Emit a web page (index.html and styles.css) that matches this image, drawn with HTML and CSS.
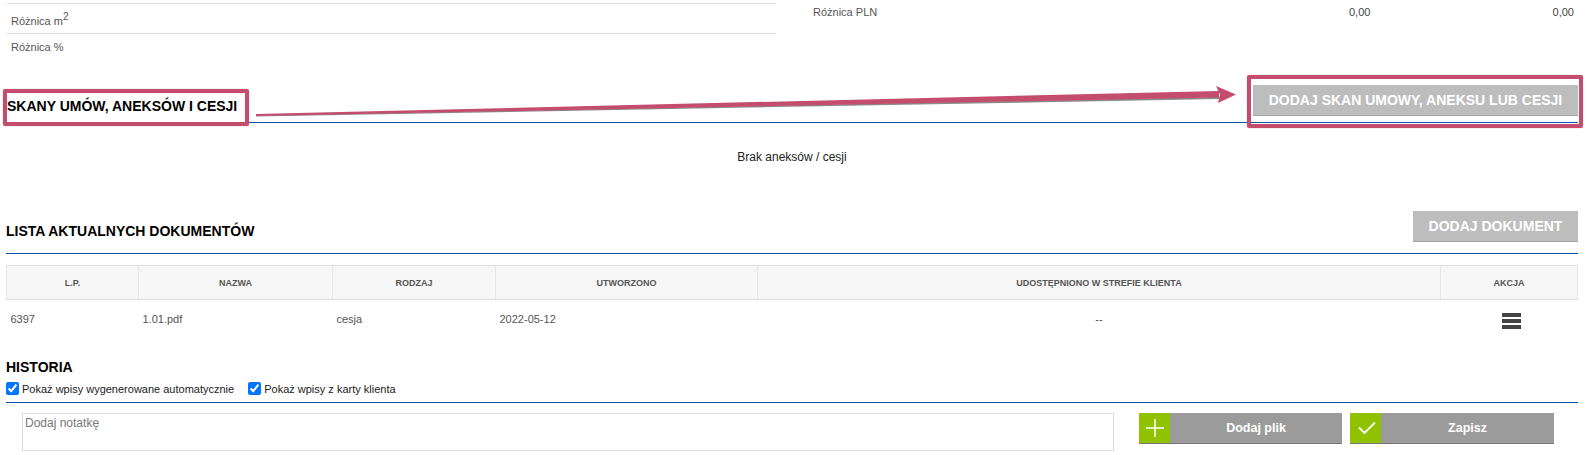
FILE: index.html
```html
<!DOCTYPE html>
<html lang="pl">
<head>
    <meta charset="UTF-8">
    <title>Umowa</title>
    <link rel="stylesheet" href="styles.css">
</head>
<body>
    <div class="page">
        <div class="summary">
            <div class="summary-left">
                <div class="summary-row row-m2">Różnica m<sup>2</sup></div>
                <div class="summary-row row-pct">Różnica %</div>
            </div>
            <div class="summary-right">
                <span class="summary-name">Różnica PLN</span>
                <span class="summary-val val-a">0,00</span>
                <span class="summary-val val-b">0,00</span>
            </div>
        </div>

        <div class="section-head head-scans">
            <h2>Skany umów, aneksów i cesji</h2>
            <button class="btn-grey btn-scan">Dodaj skan umowy, aneksu lub cesji</button>
        </div>
        <div class="empty-note">Brak aneksów / cesji</div>

        <div class="section-head head-docs">
            <h2>Lista aktualnych dokumentów</h2>
            <button class="btn-grey btn-doc">Dodaj dokument</button>
        </div>

        <table class="docs">
            <thead>
                <tr>
                    <th class="col-lp">L.p.</th>
                    <th class="col-name">Nazwa</th>
                    <th class="col-type">Rodzaj</th>
                    <th class="col-date">Utworzono</th>
                    <th class="col-share">Udostępniono w strefie klienta</th>
                    <th class="col-action">Akcja</th>
                </tr>
            </thead>
            <tbody>
                <tr>
                    <td>6397</td>
                    <td>1.01.pdf</td>
                    <td>cesja</td>
                    <td>2022-05-12</td>
                    <td class="center">--</td>
                    <td class="center">
                        <div class="menu-icon"><span></span><span></span><span></span></div>
                    </td>
                </tr>
            </tbody>
        </table>

        <h2 class="history-title">Historia</h2>
        <div class="history-filters">
            <label><input type="checkbox" checked>Pokaż wpisy wygenerowane automatycznie</label>
            <label><input type="checkbox" checked>Pokaż wpisy z karty klienta</label>
        </div>
        <div class="note-row">
            <textarea class="note" placeholder="Dodaj notatkę"></textarea>
            <button class="btn-icon btn-file">
                <span class="btn-icon-box">
                    <svg width="18" height="18" viewBox="0 0 18 18"><path d="M9 0V18M0 9H18" stroke="#fff" stroke-width="1.6" fill="none"/></svg>
                </span>
                <span class="btn-icon-label">Dodaj plik</span>
            </button>
            <button class="btn-icon btn-save">
                <span class="btn-icon-box">
                    <svg class="check" width="18" height="14" viewBox="0 0 18 14"><path d="M1 6.5L6.5 12L17 1.5" stroke="#fff" stroke-width="1.8" fill="none"/></svg>
                </span>
                <span class="btn-icon-label">Zapisz</span>
            </button>
        </div>

        <!-- annotations drawn over the screenshot -->
        <div class="mark mark-title"></div>
        <div class="mark mark-button"></div>
        <svg class="arrow" width="1000" height="40" viewBox="0 0 1000 40">
            <polygon points="6,36.5 969,18 969,20 6,37.5" fill="#8a8a8a"/>
            <polygon points="6,35 969,12 969,18.5 6,37" fill="#c44c6c"/>
            <polygon points="966,7 986,15.5 968,24 970,15.5" fill="#c44c6c"/>
        </svg>
    </div>
</body>
</html>
```

FILE: styles.css
```css
* {
    box-sizing: border-box;
}
html, body {
    margin: 0;
    padding: 0;
    background: #fff;
    overflow: hidden;
}
.page {
    position: relative;
    width: 1589px;
    height: 455px;
    padding: 3px 11px 0 6px;
    font-family: "Liberation Sans", Arial, sans-serif;
    font-size: 11px;
    color: #555;
}
.summary {
    display: flex;
    height: 68px;
}
.summary-left {
    width: 769px;
    margin-left: 1px;
}
.summary-row {
    padding-left: 4px;
    border-top: 1px solid #ddd;
}
.row-m2 {
    height: 30px;
    padding-top: 11px;
}
.row-m2 sup {
    font-size: 10px;
    line-height: 0;
}
.row-pct {
    padding-top: 7px;
}
.summary-right {
    display: flex;
    flex: 1;
    margin-left: 37px;
    height: 18px;
    padding-top: 3px;
}
.summary-name {
    width: 536px;
}
.summary-val {
    color: #444;
    text-align: right;
}
.val-a {
    width: 20px;
}
.val-b {
    width: 205px;
}
.section-head {
    display: flex;
    justify-content: space-between;
    align-items: center;
    border-bottom: 1px solid #0b57a4;
}
h2 {
    margin: 0;
    font-size: 14px;
    font-weight: bold;
    color: #000;
    text-transform: uppercase;
}
.head-scans {
    height: 52px;
    padding-top: 14px;
}
.head-scans h2 {
    padding-left: 1px;
    margin-top: 5px;
}
.btn-grey {
    border: 0;
    border-bottom: 1px solid #a5a5a5;
    background: #bdbdbd;
    color: #fff;
    font-family: inherit;
    font-size: 14px;
    font-weight: bold;
    text-transform: uppercase;
    padding: 0;
}
.btn-scan {
    width: 325px;
    height: 31px;
    margin-bottom: 6px;
}
.empty-note {
    height: 88px;
    padding-top: 27px;
    text-align: center;
    font-size: 12px;
    color: #222;
}
.head-docs {
    height: 43px;
}
.head-docs h2 {
    margin-bottom: 2px;
}
.btn-doc {
    width: 165px;
    height: 31px;
    margin-bottom: 11px;
}
.docs {
    width: 100%;
    margin-top: 11px;
    border-collapse: collapse;
    table-layout: fixed;
}
.docs th {
    height: 34px;
    padding: 0;
    background: #f6f6f6;
    border: 1px solid #e6e6e6;
    border-top: 1px solid #ddd;
    border-bottom: 1px solid #ddd;
    font-size: 9px;
    font-weight: bold;
    color: #555;
    text-transform: uppercase;
}
.docs td {
    height: 38px;
    padding: 0 4px;
    font-size: 11px;
    color: #555;
}
.docs .center {
    text-align: center;
}
.col-lp { width: 132px; }
.col-name { width: 194px; }
.col-type { width: 163px; }
.col-date { width: 262px; }
.col-action { width: 137px; }
.menu-icon {
    display: flex;
    flex-direction: column;
    gap: 2px;
    width: 19px;
    margin: 4px 0 0 57px;
}
.menu-icon span {
    display: block;
    height: 4px;
    background: #444;
}
.history-title {
    margin-top: 21px;
    line-height: 16px;
}
.history-filters {
    display: flex;
    gap: 14px;
    height: 28px;
    padding-top: 7px;
    border-bottom: 1px solid #0b57a4;
    font-size: 11px;
    color: #222;
}
.history-filters label {
    display: flex;
    align-items: center;
    height: 14px;
}
.history-filters input {
    width: 13px;
    height: 13px;
    margin: 0 3px 0 0;
}
.note-row {
    display: flex;
    margin-top: 10px;
    padding-left: 16px;
}
.note {
    display: block;
    width: 1092px;
    height: 38px;
    padding: 2px 2px;
    border: 1px solid #ddd;
    font-family: inherit;
    font-size: 12px;
    resize: none;
}
.note::placeholder {
    color: #777;
}
.btn-icon {
    display: flex;
    height: 31px;
    padding: 0;
    border: 0;
    border-bottom: 1px solid #777;
    background: #9b9b9b;
    color: #fff;
    font-family: inherit;
    font-size: 12.5px;
    font-weight: bold;
}
.btn-file {
    width: 203px;
    margin-left: 25px;
}
.btn-save {
    width: 204px;
    margin-left: 8px;
}
.btn-icon-box {
    display: flex;
    align-items: center;
    justify-content: center;
    width: 31px;
    height: 30px;
    background: #90c200;
}
.check {
    margin-left: 2px;
}
.btn-icon-label {
    flex: 1;
    line-height: 30px;
    text-align: center;
}
.mark {
    position: absolute;
    border: 4px solid #c44c6c;
    border-radius: 2px;
    box-shadow: 0 0 1px #777;
}
.mark-title {
    left: 3px;
    top: 89px;
    width: 246px;
    height: 37px;
}
.mark-button {
    left: 1247px;
    top: 75px;
    width: 336px;
    height: 53px;
}
.arrow {
    position: absolute;
    left: 250px;
    top: 79px;
}
```
